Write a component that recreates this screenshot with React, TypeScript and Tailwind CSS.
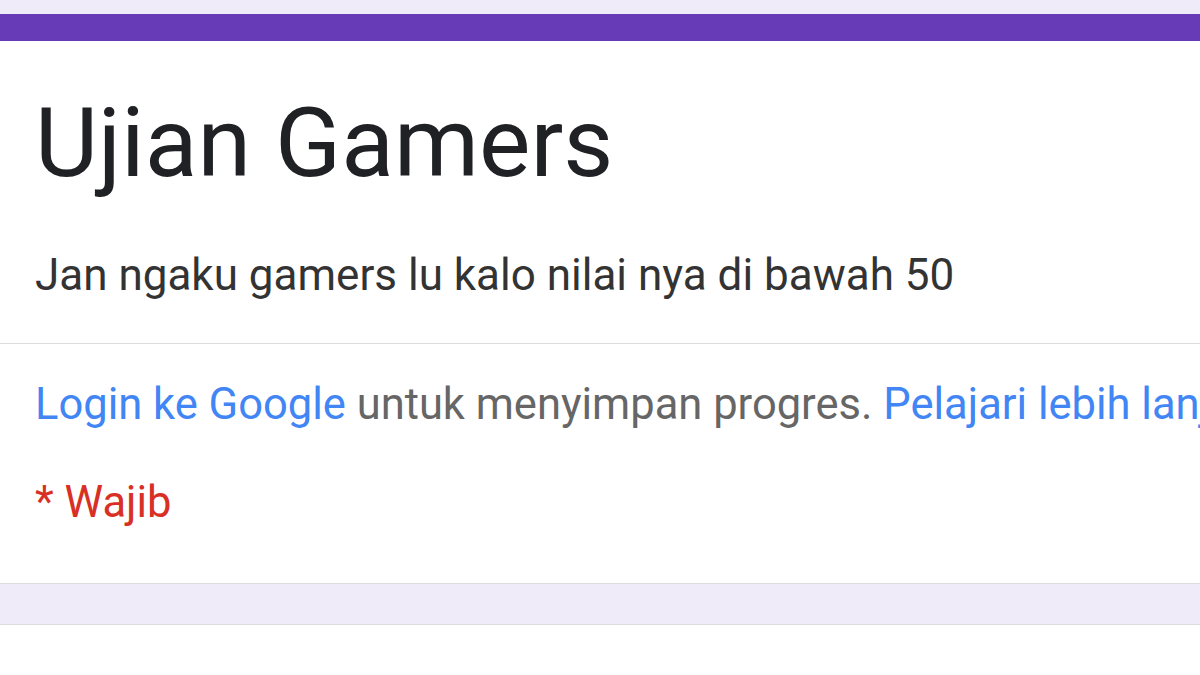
export default function App() {
  return (
    <div className="w-[1200px] h-[675px] overflow-hidden bg-white font-['Roboto',sans-serif]">
      <div className="h-[14px] bg-[#f0ebf8]" />
      <div className="h-[27px] bg-[#673ab7]" />
      <section className="bg-white pt-[54px]">
        <div className="px-[35px] whitespace-nowrap">
          <h1 className="text-[97px] leading-none text-[#202124]">Ujian Gamers</h1>
          <p className="mt-[61px] text-[44px] leading-none text-[#333333]">
            Jan ngaku gamers lu kalo nilai nya di bawah 50
          </p>
        </div>
        <div className="mt-[46px] h-px bg-[#dadce0]" />
        <div className="px-[35px] pt-[39px] pb-[59px] whitespace-nowrap">
          <p className="text-[43.5px] leading-none text-[#666666]">
            <span className="text-[#4285f4]">Login ke Google</span> untuk menyimpan progres.{" "}
            <span className="text-[#4285f4]">Pelajari lebih lanjut</span>
          </p>
          <p className="mt-[54px] text-[43.5px] leading-none text-[#d93025]">* Wajib</p>
        </div>
      </section>
      <div className="h-[42px] border-y border-[#dadce0] bg-[#f0ebf8]" />
      <div className="bg-white" />
    </div>
  )
}
